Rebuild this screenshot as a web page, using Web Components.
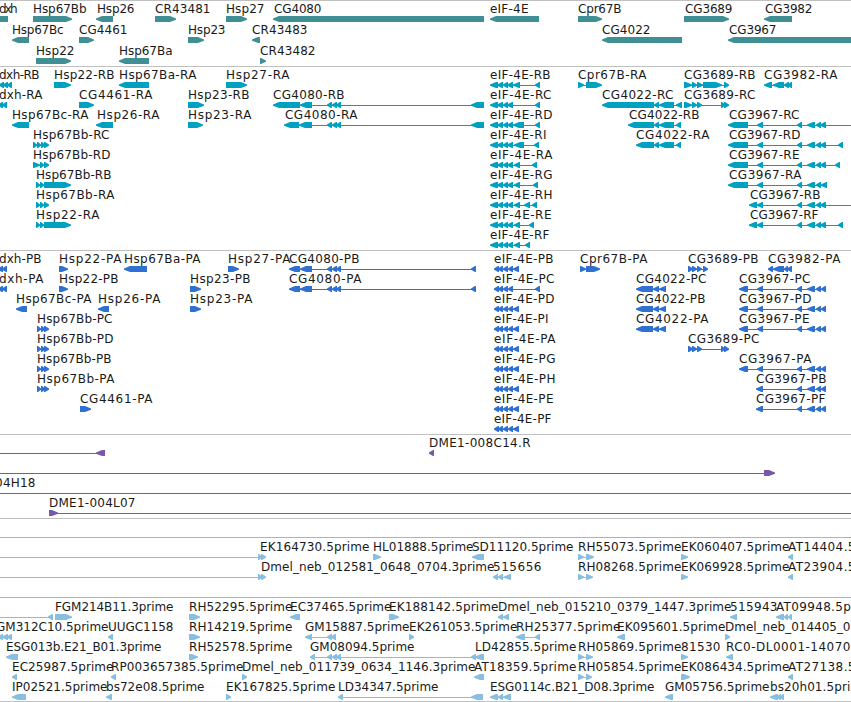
<!DOCTYPE html>
<html lang="en">
<head>
<meta charset="utf-8">
<title>Genome browser</title>
<style>html,body{margin:0;background:#fff}body{width:851px;height:702px;overflow:hidden}</style>
</head>
<body>
<genome-view></genome-view>
<script>
// Feature syntax: label,labelStart,labelEnd,direction,exon ranges (a:b separated by spaces)
const E = '490:498 497:503 503:508 507:513';
const P = '494:499 498:503 503:508 508:513 513:519';
const T = '757:763 797:802 807:815 816:821';
const C = '327:332 332:337 336:341';
const TRACKS = [
 {color:'#408f94', row:21, pad:2, rows:[
  `dxh,-1,17,b,-8:8;Hsp67Bb,33,86,r,33:72;Hsp26,97,134,l,96:113;CR43481,155,210,r,155:176;Hsp27,226,264,r,226:247;CG4080,274,321,l,273:484;eIF-4E,490,528,l,490:539;Cpr67B,578,621,r,578:602;CG3689,685,732,r,684:729;CG3982,765,812,l,764:792`,
  `Hsp67Bc,12,63,l,12:29;CG4461,79,127,r,79:94;Hsp23,188,225,r,188:204;CR43483,252,307,l,252:260;CG4022,602,650,l,602:682;CG3967,729,776,l,728:860`,
  `Hsp22,36,74,r,36:71;Hsp67Ba,119,172,l,119:149;CR43482,260,315,r,260:266`]},
 {color:'#00a0c0', row:20, pad:3, rows:[
  `dxh-RB,-1,39,l,-1:4 3:8 7:12;Hsp22-RB,54,114,r,54:71;Hsp67Ba-RA,119,196,l,119:149;Hsp27-RA,226,289,r,226:247;eIF-4E-RB,490,550,l,${E} 513:520 535:540;Cpr67B-RA,578,646,r,578:584 586:602;CG3689-RB,684,755,r,684:692 692:697 697:703 703:722 724:729;CG3982-RA,764,837,l,764:772 773:784 784:789 788:792`,
  `dxh-RA,-1,42,l,-2:3 2:7;CG4461-RA,79,152,r,79:94;Hsp23-RB,188,249,r,188:204;CG4080-RB,273,344,l,273:300 300:312 ${C} 471:484;eIF-4E-RC,490,551,l,${E} 535:540;CG4022-RC,602,673,l,602:654 654:659 659:674 676:682;CG3689-RC,684,755,r,684:692 692:697 697:702 721:725 724:729`,
  `Hsp67Bc-RA,12,88,l,12:29;Hsp26-RA,97,159,l,96:113;Hsp23-RA,188,251,r,188:203;CG4080-RA,285,357,l,284:299 299:312 ${C} 471:484;eIF-4E-RD,490,552,l,${E} 513:524 535:540;CG4022-RB,629,699,l,628:654 654:659 659:674 676:681;CG3967-RC,729,799,l,728:748 ${T} 820:826 860:870`,
  `Hsp67Bb-RC,33,109,r,33:37 37:41 41:45 44:49;eIF-4E-RI,490,546,l,${E} 514:524 534:539;CG4022-RA,636,709,l,636:654 654:659 659:674 676:681;CG3967-RD,729,800,l,728:748 ${T} 820:826 838:843`,
  `Hsp67Bb-RD,33,110,r,33:40 40:44 44:49;eIF-4E-RA,490,552,l,${E} 514:520 532:537;CG3967-RE,729,799,l,728:748 ${T} 820:826 835:840`,
  `Hsp67Bb-RB,36,111,r,36:40 40:44 44:71;eIF-4E-RG,490,552,l,${E} 514:520 533:538;CG3967-RA,729,801,l,728:748 ${T} 821:827`,
  `Hsp67Bb-RA,36,114,r,36:40 40:44 44:49;eIF-4E-RH,490,552,l,${E} 514:520 524:530 532:537;CG3967-RB,750,820,l,749:757 ${T} 820:826 860:870`,
  `Hsp22-RA,36,99,r,36:40 40:44 44:71;eIF-4E-RE,490,551,l,${E} 514:520 529:534;CG3967-RF,750,818,l,749:757 ${T} 820:826 838:843`,
  `eIF-4E-RF,490,549,l,${E} 514:520 525:530`]},
 {color:'#3070d0', row:20, pad:3, rows:[
  `dxh-PB,-1,41,l,-2:3 2:7;Hsp22-PA,59,121,r,59:68;Hsp67Ba-PA,124,200,l,124:147;Hsp27-PA,228,290,r,228:239;CG4080-PB,289,359,l,289:300 300:312 ${C} 471:476;eIF-4E-PB,494,553,l,${P};Cpr67B-PA,580,647,r,580:586 586:600;CG3689-PB,688,758,r,688:693 692:697 697:702 703:708;CG3982-PA,768,840,l,768:773 773:784 784:788 787:792`,
  `dxh-PA,-1,43,l,-2:3 2:7;Hsp22-PB,59,118,r,59:68;Hsp23-PB,190,250,r,190:201;CG4080-PA,289,361,l,289:300 300:312 ${C} 471:476;eIF-4E-PC,494,554,l,494:499 498:503 503:508 508:513 535:540;CG4022-PC,636,706,l,636:653 653:659 659:666;CG3967-PC,739,810,l,739:748 ${T} 821:826`,
  `Hsp67Bc-PA,16,91,l,16:27;Hsp26-PA,98,160,l,98:109;Hsp23-PA,190,252,r,190:201;eIF-4E-PD,494,554,l,${P};CG4022-PB,636,705,l,636:653 653:659 659:666;CG3967-PD,739,811,l,739:748 ${T} 821:826`,
  `Hsp67Bb-PC,37,112,r,37:41 41:45 44:49;eIF-4E-PI,494,548,l,${P};CG4022-PA,636,708,l,636:653 653:659 659:666;CG3967-PE,739,809,l,739:748 ${T} 821:826`,
  `Hsp67Bb-PD,37,113,r,37:41 41:45 44:49;eIF-4E-PA,494,555,l,${P};CG3689-PC,688,759,r,688:693 692:697 697:702 721:725 724:729`,
  `Hsp67Bb-PB,37,111,r,37:41 41:45 44:49;eIF-4E-PG,494,555,l,${P};CG3967-PA,739,811,l,739:748 ${T} 821:826`,
  `Hsp67Bb-PA,37,114,r,37:41 41:45 44:49;eIF-4E-PH,494,555,l,${P};CG3967-PB,756,826,l,756:763 ${T} 821:826`,
  `CG4461-PA,80,152,r,80:91;eIF-4E-PE,494,553,l,${P};CG3967-PF,756,825,l,756:763 ${T} 821:826`,
  `eIF-4E-PF,494,551,l,${P}`]},
 {color:'#7858a8', row:20, pad:3, rows:[
  `,0,0,l,-20:-10 96:105;DME1-008C14.R,429,530,l,429:434`,
  `,0,0,r,-20:-10 764:775`,
  `DME1-004H18,-53,35,r,-20:-10 860:870`,
  `DME1-004L07,49,135,r,49:58 860:870`]},
 {color:'#88bedf', row:20, pad:2, rows:[
  `,0,0,r,-20:-10 860:870`,
  `,0,0,r,-20:-10 258:262 261:266;EK164730.5prime,260,369,r,;HL01888.5prime,373,473,r,373:381;SD11120.5prime,472,573,l,472:484;RH55073.5prime,578,681,r,578:584 586:594;EK060407.5prime,681,789,r,681:688;AT14404.5prime,788,892,l,788:793`,
  `,0,0,r,-20:-10 258:262 261:266;Dmel_neb_012581_0648_0704.3prime,261,494,r,;515656,493,541,l,493:498 498:503 504:511;RH08268.5prime,578,681,r,578:584 586:593;EK069928.5prime,681,789,r,681:688;AT23904.5prime,788,892,l,788:793`,
  `,0,0,r,-20:-10 860:870`,
  `,0,0,l,-20:-10 48:53;FGM214B11.3prime,55,173,r,55:72;RH52295.5prime,189,292,r,189:200;EC37465.5prime,290,391,l,290:300;EK188142.5prime,389,498,r,389:399;Dmel_neb_015210_0379_1447.3prime,498,731,l,498:503 503:509;515943,730,777,l,730:737;AT09948.5prime,776,879,l,776:784 784:788 788:792`,
  `GM312C10.5prime,-4,108,l,-2:3 2:8 7:12;UUGC1158,108,173,l,108:113;RH14219.5prime,189,292,r,189:200;GM15887.5prime,305,409,l,305:312 327:332 331:336;EK261053.5prime,409,517,r,409:414;RH25377.5prime,516,620,l,516:525 535:540;EK095601.5prime,617,725,l,617:625;Dmel_neb_014405_0,725,850,r,725:730`,
  `ESG013b.E21_B01.3prime,6,161,l,6:18;RH52578.5prime,189,292,r,189:198;GM08094.5prime,310,414,l,310:315 ${C} 471:476 475:484;LD42855.5prime,475,576,l,;RH05869.5prime,578,681,r,578:584 586:593;81530,681,720,r,681:688;RC0-DL0001-14070,726,850,l,726:733`,
  `EC25987.5prime,12,113,l,12:17;RP003657385.5prime,111,243,l,111:116;Dmel_neb_011739_0634_1146.3prime,242,475,r,242:247;AT18359.5prime,474,576,l,474:484;RH05854.5prime,578,681,r,578:584 586:592;EK086434.5prime,681,789,r,681:690;AT27138.5prime,788,892,l,788:793`,
  `IP02521.5prime,12,107,l,12:26;bs72e08.5prime,106,204,l,106:112;EK167825.5prime,226,335,r,226:231;LD34347.5prime,338,438,l,338:343 471:483;ESG0114c.B21_D08.3prime,490,654,l,490:498 498:503 503:511;GM05756.5prime,665,769,l,665:673;bs20h01.5prime,770,869,l,770:778 777:781 780:784`]}
];

class FeatureRow extends HTMLElement {
  set features(spec) {
    let out = '';
    for (const f of spec.split(';')) {
      const [label, x, end, dir, ex] = f.split(',');
      const exons = ex ? ex.split(' ').map(e => e.split(':').map(Number)) : [];
      if (exons.length > 1) {
        const a = exons[0][0], b = exons[exons.length - 1][1];
        out += `<rect x="${a + 1}" y="18" width="${b - a - 2}" height="1"/>`;
      }
      for (const [a, b] of exons) {
        // Head length grows with the exon; the tip is blunt, one pixel high
        const h = Math.min(b - a - 1, 6);
        if (dir === 'b') out += `<rect x="${a}" y="15" width="${b - a}" height="6"/>`;
        else if (dir === 'l') out += `<path d="M${a} 17.4L${a + h} 15H${b}V21H${a + h}L${a} 18.8Z"/>`;
        else out += `<path d="M${b} 17.4L${b - h} 15H${a}V21H${b - h}L${b} 18.8Z"/>`;
      }
      if (label) out += `<text x="${+x}" y="12" textLength="${end - x + 0.5}">${label}</text>`;
    }
    this.shadowRoot.innerHTML = `<style>
      :host{display:block;height:var(--row-height)}
      svg{display:block;width:100%;height:100%;overflow:visible;fill:var(--track-color)}
      text{fill:#1a1a1a;font:12px "DejaVu Sans",sans-serif}
    </style><svg>${out}</svg>`;
  }
  constructor() { super(); this.attachShadow({mode: 'open'}); }
}
customElements.define('feature-row', FeatureRow);

class GenomeTrack extends HTMLElement {
  constructor() {
    super();
    this.attachShadow({mode: 'open'}).innerHTML = `<style>
      :host{display:block;border-top:1px solid #c0c0c0}</style><slot></slot>`;
  }
}
customElements.define('genome-track', GenomeTrack);

class GenomeView extends HTMLElement {
  constructor() {
    super();
    this.attachShadow({mode: 'open'}).innerHTML = `<style>
      :host{display:flex;flex-direction:column;width:851px;height:701px;border-bottom:1px solid #c0c0c0;background:#fff;overflow:hidden}
      genome-track{flex:none}</style>`;
    for (const t of TRACKS) {
      const track = document.createElement('genome-track');
      track.style.cssText = `--track-color:${t.color};--row-height:${t.row}px;padding-bottom:${t.pad}px`;
      for (const r of t.rows) {
        const row = document.createElement('feature-row');
        row.features = r;
        track.append(row);
      }
      this.shadowRoot.append(track);
    }
  }
}
customElements.define('genome-view', GenomeView);
</script>
</body>
</html>
